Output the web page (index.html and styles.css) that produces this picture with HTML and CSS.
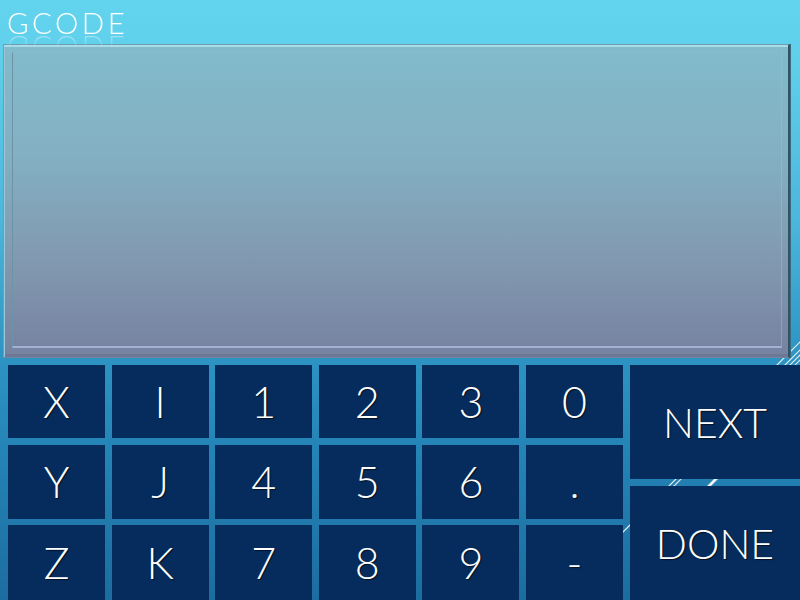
FILE: index.html
```html
<!DOCTYPE html>
<html>
<head>
<meta charset="utf-8">
<link rel="stylesheet" href="styles.css">
</head>
<body>
<svg class="decor" width="800" height="600" viewBox="0 0 800 600">
  <g stroke="#ffffff" stroke-linecap="butt">
    <line x1="768" y1="374" x2="804" y2="338" stroke-width="1.2" opacity="0.85"/>
    <line x1="775" y1="375" x2="810" y2="340" stroke-width="1.2" opacity="0.85"/>
    <line x1="600" y1="555" x2="815" y2="340" stroke-width="1.2" opacity="0.9"/>
    <line x1="660" y1="500" x2="820" y2="340" stroke-width="1.2" opacity="0.8"/>
    <line x1="690" y1="505" x2="730" y2="465" stroke-width="2.6" opacity="0.95"/>
  </g>
</svg>
<div class="screen">
  <header class="header">
    <h1 class="title">GCODE</h1>
  </header>
  <section class="panel">
    <div class="panel-inner"></div>
  </section>
  <section class="keypad">
    <div class="keys">
      <button class="key">X</button>
      <button class="key">I</button>
      <button class="key">1</button>
      <button class="key">2</button>
      <button class="key">3</button>
      <button class="key">0</button>
      <button class="key">Y</button>
      <button class="key">J</button>
      <button class="key">4</button>
      <button class="key">5</button>
      <button class="key">6</button>
      <button class="key">.</button>
      <button class="key">Z</button>
      <button class="key">K</button>
      <button class="key">7</button>
      <button class="key">8</button>
      <button class="key">9</button>
      <button class="key">-</button>
    </div>
    <div class="actions">
      <button class="key action next">NEXT</button>
      <button class="key action done">DONE</button>
    </div>
  </section>
</div>
</body>
</html>
```
FILE: styles.css
```css
html, body {
  margin: 0;
  padding: 0;
}
body {
  width: 800px;
  height: 600px;
  overflow: hidden;
  position: relative;
  background: linear-gradient(180deg, #63d4ee 0px, #5fcfeb 60px, #4cb6dc 220px, #2d93c3 360px, #2482b5 460px, #1c6d9f 600px);
  font-family: Lato, "Open Sans", sans-serif;
}
.decor {
  position: absolute;
  left: 0;
  top: 0;
  z-index: 0;
}
.screen {
  position: relative;
  z-index: 1;
  display: flex;
  flex-direction: column;
  height: 600px;
}
.header {
  height: 44px;
  padding-left: 7px;
}
.title {
  margin: 0;
  padding-top: 8px;
  font-weight: 300;
  font-size: 29.5px;
  line-height: 30px;
  letter-spacing: 3.4px;
  color: #ffffff;
  -webkit-box-reflect: below -6px linear-gradient(transparent 55%, rgba(255,255,255,0.5));
  display: inline-block;
}
.panel {
  margin: 0 10px 0 3px;
  height: 314px;
  box-sizing: border-box;
  background: linear-gradient(180deg, #82bbcb 0%, #83b0c2 35%, #8198b0 70%, #7682a0 100%);
  border-top: 1px solid #6e9fae;
  border-left: 1px solid #6d9fb2;
  border-bottom: 1px solid #7483a0;
  border-right: 2px solid #2d5566;
  box-shadow: inset 0 2px 0 #a9dbe8, inset 1px 0 0 #9ec7d4, inset 0 -3px 0 #6c7896, 1px 0 0 #3c6b7d;
  padding: 7px 6px 9px 8px;
}
.panel-inner {
  height: 100%;
  box-sizing: border-box;
  border-left: 1px solid #6c93a6;
  border-top: 1px solid rgba(140,190,205,0.5);
  border-right: 1px solid rgba(150,195,210,0.5);
  border-bottom: 2px solid #a3b2d3;
}
.keypad {
  margin-top: 7px;
  padding-left: 8px;
  display: flex;
  flex: 1;
  gap: 7px;
}
.keys {
  display: grid;
  grid-template-columns: repeat(6, 97px);
  grid-template-rows: 73px 74px 1fr;
  column-gap: 6.6px;
  row-gap: 6.5px;
}
.key {
  border: 0;
  margin: 0;
  padding: 0;
  background: #052c5c;
  color: #ffffff;
  font-family: Lato, "Open Sans", sans-serif;
  font-weight: 300;
  font-size: 43px;
  line-height: 1;
  text-shadow: 1px 1px 1px rgba(0,0,0,0.6);
  display: flex;
  align-items: center;
  justify-content: center;
}
.actions {
  flex: 1;
  display: flex;
  flex-direction: column;
  gap: 7px;
}
.action {
  font-size: 41px;
}
.next {
  height: 114px;
}
.done {
  flex: 1;
}
```
